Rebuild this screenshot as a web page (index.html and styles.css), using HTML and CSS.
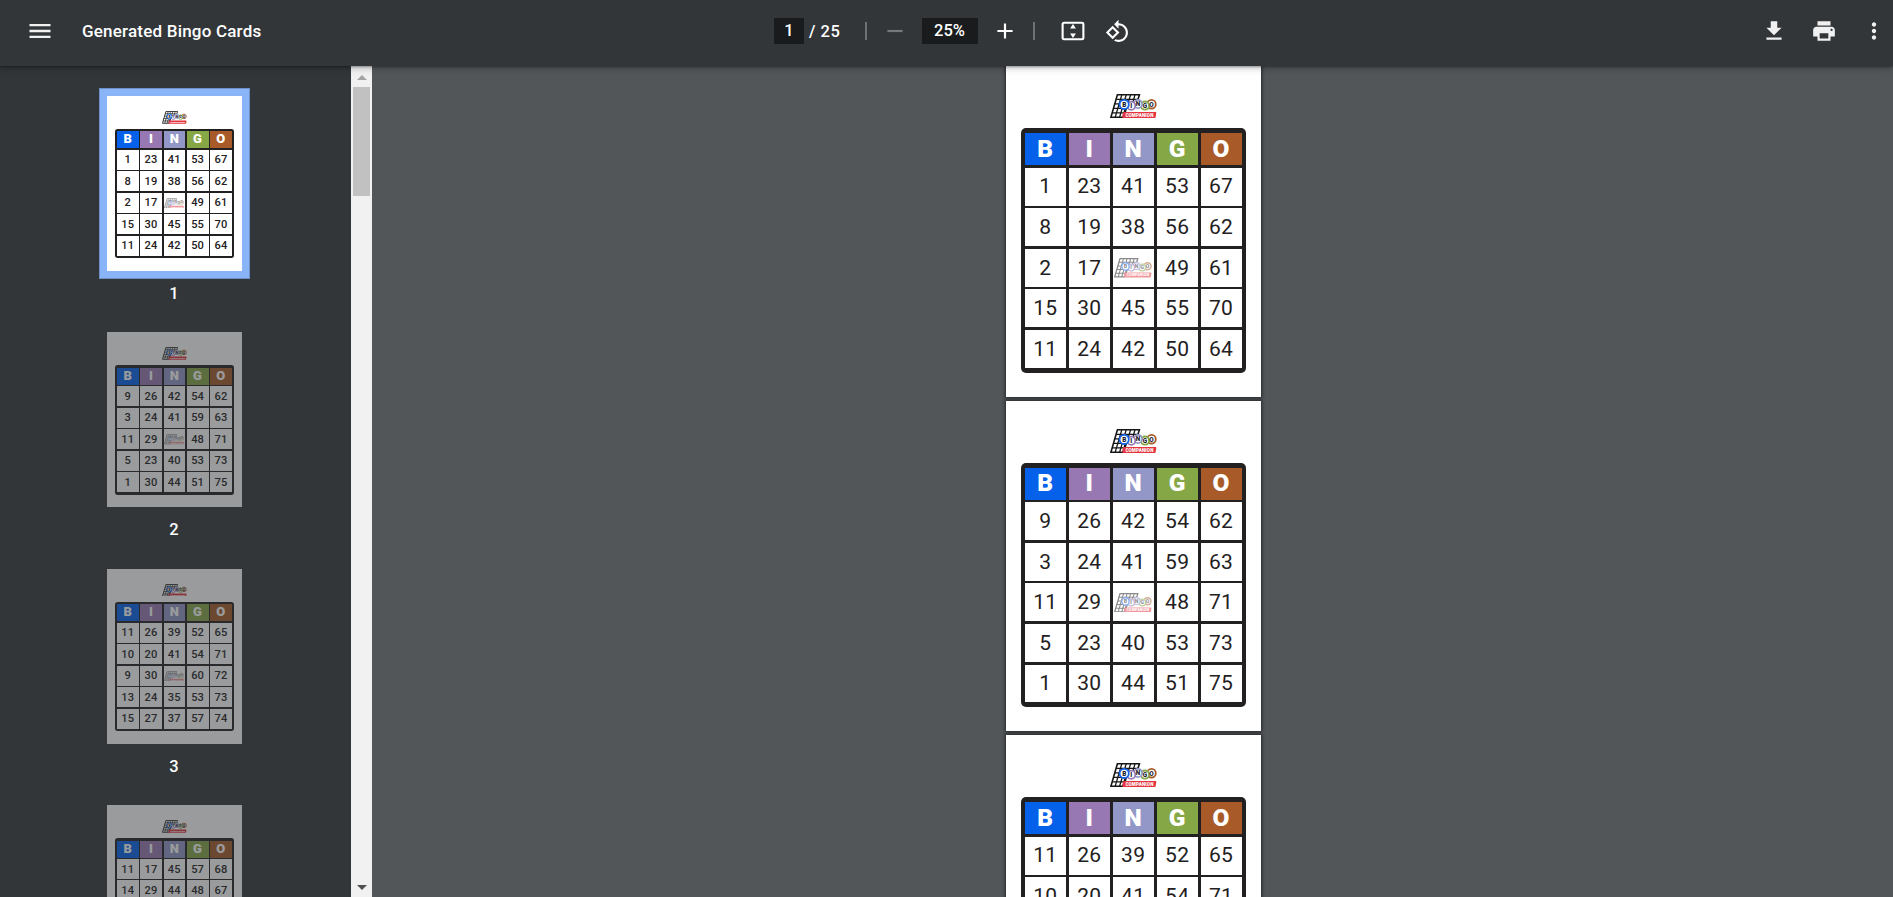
FILE: index.html
```html
<!DOCTYPE html>
<html lang="en">
<head>
<meta charset="utf-8">
<title>Generated Bingo Cards</title>
<link rel="stylesheet" href="styles.css">
</head>
<body>
<header class="toolbar">
  <div class="toolbar-start">
    <svg class="icon-menu" viewBox="0 0 24 24"><path d="M3 18h18v-2H3v2zm0-5h18v-2H3v2zm0-7v2h18V6H3z"/></svg>
    <h1 class="title">Generated Bingo Cards</h1>
  </div>
  <div class="toolbar-center">
    <span class="field page-field">1</span>
    <span class="page-total">/ 25</span>
    <span class="divider divider-a"></span>
    <svg class="icon dim" viewBox="0 0 24 24"><path d="M5 11h14v2H5z"/></svg>
    <span class="field zoom-field">25%</span>
    <svg class="icon plus" viewBox="0 0 24 24"><path d="M19 13h-6v6h-2v-6H5v-2h6V5h2v6h6v2z"/></svg>
    <span class="divider divider-b"></span>
    <svg class="icon-fit" viewBox="0 0 24 24"><rect x="3.1" y="4.9" width="17.8" height="14.2" rx="1.2" fill="none" stroke="currentColor" stroke-width="1.8"/><path d="M12 6.1 14.5 9.8H9.5zM12 17.9 14.5 14.2H9.5z"/></svg>
    <svg class="icon-rotate" viewBox="0 0 24 24"><path d="M7.34 6.41L.86 12.9l6.49 6.48 6.49-6.48-6.5-6.49zM3.69 12.9l3.66-3.66L11 12.9l-3.66 3.66-3.65-3.66zm15.67-6.26C17.61 4.88 15.3 4 13 4V.76L8.76 5 13 9.24V6c1.79 0 3.58.68 4.95 2.05 2.73 2.73 2.73 7.17 0 9.9C16.58 19.32 14.79 20 13 20c-.97 0-1.94-.21-2.84-.61l-1.49 1.49C10.02 21.62 11.51 22 13 22c2.3 0 4.61-.88 6.36-2.64 3.52-3.51 3.52-9.21 0-12.72z"/></svg>
  </div>
  <div class="toolbar-end">
    <svg class="icon" viewBox="0 0 24 24"><path d="M19 9h-4V3H9v6H5l7 7 7-7zM5 18v2h14v-2H5z"/></svg>
    <svg class="icon" viewBox="0 0 24 24"><path d="M19 8H5c-1.66 0-3 1.34-3 3v6h4v4h12v-4h4v-6c0-1.66-1.34-3-3-3zm-3 11H8v-5h8v5zm3-7c-.55 0-1-.45-1-1s.45-1 1-1 1 .45 1 1-.45 1-1 1zm-1-9H6v4h12V3z"/></svg>
    <svg class="icon" viewBox="0 0 24 24"><path d="M12 8c1.1 0 2-.9 2-2s-.9-2-2-2-2 .9-2 2 .9 2 2 2zm0 2c-1.1 0-2 .9-2 2s.9 2 2 2 2-.9 2-2-.9-2-2-2zm0 6c-1.1 0-2 .9-2 2s.9 2 2 2 2-.9 2-2-.9-2-2-2z"/></svg>
  </div>
</header>

<div class="workspace">
  <nav class="thumbnails" id="thumbnails"></nav>
  <div class="scrollbar">
    <svg class="arrow arrow-up" viewBox="0 0 10 5"><path d="M0 5 5 0l5 5z"/></svg>
    <div class="scroll-thumb"></div>
    <svg class="arrow arrow-down" viewBox="0 0 10 5"><path d="M0 0l5 5 5-5z"/></svg>
  </div>
  <main class="pages" id="pages"></main>
</div>
<script src="cards.js"></script>
</body>
</html>
```
FILE: styles.css
```css
* { box-sizing: border-box; }

body {
  margin: 0;
  height: 100vh;
  overflow: hidden;
  display: flex;
  flex-direction: column;
  background: #525659;
  font-family: Roboto, "Liberation Sans", sans-serif;
}

/* Toolbar */
.toolbar {
  position: relative;
  z-index: 2;
  flex: none;
  height: 66px;
  display: grid;
  grid-template-columns: 774px 1fr auto;
  align-items: center;
  padding-bottom: 4px;
  background: #323639;
  color: #f1f1f1;
  box-shadow: 0 -2px 8px rgba(0, 0, 0, .09), 0 4px 8px rgba(0, 0, 0, .06), 0 1px 2px rgba(0, 0, 0, .3), 0 2px 6px rgba(0, 0, 0, .15);
}
.toolbar svg { display: block; flex: none; fill: currentColor; }
.toolbar-start, .toolbar-center, .toolbar-end { display: flex; align-items: center; }
.toolbar-start { padding-left: 25.5px; }
.icon-menu { width: 28px; height: 28px; }
.title { margin: 0 0 0 28.5px; font-size: 17px; font-weight: 500; line-height: 20px; letter-spacing: .2px; color: #fff; }
.toolbar-center { font-size: 16.5px; font-weight: 500; color: #fff; }
.field {
  height: 26px;
  line-height: 25px;
  text-align: center;
  background: #191b1c;
}
.page-field { width: 30px; }
.zoom-field { width: 56px; margin-left: 14px; }
.page-total { width: 37px; margin-left: 5px; letter-spacing: .5px; white-space: nowrap; }
.divider { width: 2px; height: 18px; background: #6e7173; }
.divider-a { margin: 0 14.5px 0 19px; }
.divider-b { margin: 0 23.5px 0 15.5px; }
.icon { width: 26px; height: 26px; }
.dim { color: #76797b; }
.plus { margin-left: 14px; }
.icon-fit { width: 28px; height: 28px; }
.icon-rotate { width: 25px; height: 25px; margin-left: 18.5px; }
.toolbar-end { gap: 24px; padding-right: 6px; }

/* Body below the toolbar */
.workspace { flex: 1; min-height: 0; display: grid; grid-template-columns: 351px 21px 1fr; }
.thumbnails { overflow: hidden; padding: 30px 2px 0 0; background: #323639; }
.thumb { height: 236.4px; display: flex; flex-direction: column; align-items: center; }
.thumb .card { --u: .5294px; --gap-y: 2.7; --gap-x: 2.9; --digit-weight: 500; flex: none; opacity: .5; }
.thumb.selected .card { opacity: 1; box-shadow: 0 0 0 7px #8ab4f8, 0 0 0 8px #6d90c8; }
.thumb-label { margin-top: 13px; padding-right: 1px; font-size: 16.5px; font-weight: 500; line-height: 20px; color: #fff; }

.scrollbar { display: flex; flex-direction: column; align-items: center; background: #f1f1f1; }
.arrow { display: block; width: 10px; height: 5px; }
.arrow-up { margin: 9px 0 7px; fill: #a3a3a3; }
.scroll-thumb { width: 17px; height: 109px; background: #c1c1c1; }
.arrow-down { margin: auto 0 7px; fill: #505050; }

.pages {
  overflow: hidden;
  display: flex;
  flex-direction: column;
  align-items: center;
  gap: 4px;
  padding-left: 2px;
}
.pages .card { --u: 1px; --gap-y: 2.7; --gap-x: 2.8; --digit-weight: 400; flex: none; box-shadow: 0 0 3px 1px rgba(20, 22, 24, .7); }

/* Card: every length is a multiple of --u, so one card serves both sizes */
.card {
  width: calc(255 * var(--u));
  height: calc(330.5 * var(--u));
  padding-top: calc(28 * var(--u));
  display: flex;
  flex-direction: column;
  align-items: center;
  background: #fff;
  color: #232021;
}
.card-logo { display: block; width: calc(47 * var(--u)); height: calc(24 * var(--u)); margin-bottom: calc(10 * var(--u)); }
.board {
  width: calc(225 * var(--u));
  height: calc(244.5 * var(--u));
  padding: calc(5 * var(--u)) calc(4 * var(--u)) calc(4.5 * var(--u));
  display: grid;
  grid-template-columns: repeat(5, 1fr);
  grid-template-rows: calc(32 * var(--u)) repeat(5, 1fr);
  gap: calc(var(--gap-y) * var(--u)) calc(var(--gap-x) * var(--u));
  border-radius: calc(5 * var(--u));
  background: #232021;
}
.cell {
  min-width: 0;
  min-height: 0;
  display: flex;
  align-items: center;
  justify-content: center;
  padding: calc(.6 * var(--u)) calc(.6 * var(--u)) 0 0;
  background: #fff;
  font-size: calc(21 * var(--u));
  font-weight: var(--digit-weight);
  letter-spacing: calc(.3 * var(--u));
  line-height: 1;
}
.head { padding-top: 0; color: #fff; font-size: calc(24.5 * var(--u)); font-weight: 900; }
.head-b { background: #0560ea; }
.head-i { background: #9878b2; }
.head-n { background: #9297c8; }
.head-g { background: #86a745; }
.head-o { background: #a85b29; }
.free-logo { display: block; flex: none; width: calc(38 * var(--u)); height: calc(19.5 * var(--u)); opacity: .5; }

.logo-letters, .logo-banner { font-family: Roboto, sans-serif; font-weight: 900; letter-spacing: 0; text-anchor: middle; }
.logo-letters { font-size: 6.4px; fill: #1c1c2c; }
.logo-banner { font-size: 4.6px; fill: #fff; }
```
FILE: cards.js
```js
// Each card is five rows; null marks the free space.
const cards = [
  [[1, 23, 41, 53, 67], [8, 19, 38, 56, 62], [2, 17, null, 49, 61], [15, 30, 45, 55, 70], [11, 24, 42, 50, 64]],
  [[9, 26, 42, 54, 62], [3, 24, 41, 59, 63], [11, 29, null, 48, 71], [5, 23, 40, 53, 73], [1, 30, 44, 51, 75]],
  [[11, 26, 39, 52, 65], [10, 20, 41, 54, 71], [9, 30, null, 60, 72], [13, 24, 35, 53, 73], [15, 27, 37, 57, 74]],
  [[11, 17, 45, 57, 68], [14, 29, 44, 48, 67]]
];

const logo = (cls) => `<svg class="${cls}" viewBox="0 0 47 24">
  <path d="M7.4.8H29.4L26 12H16L13 23.2H.9Z" fill="#fff" stroke="#161616" stroke-width="1.6"/>
  <path d="M11.8.8 5.2 23.2M16.2.8 9.6 23.2M20.6.8 14.8 20M25 .8 22.6 9M6.1 5.3H28M4.8 9.8H26M3.5 14.3H17M2.2 18.8H14" fill="none" stroke="#161616" stroke-width="1.25"/>
  <g fill="#fff" stroke-width="1.8">
    <circle cx="41.5" cy="10.2" r="4.3" stroke="#a85b29"/>
    <circle cx="35" cy="11.6" r="4.1" stroke="#86a745"/>
    <circle cx="28" cy="10" r="4.1" stroke="#9297c8"/>
    <circle cx="21.2" cy="11.8" r="4.1" stroke="#9878b2"/>
    <circle cx="14.2" cy="10.4" r="4.6" stroke="#1462e6"/>
  </g>
  <g class="logo-letters"><text x="14.2" y="12.7">B</text><text x="21.2" y="14.1">I</text><text x="28" y="12.3">N</text><text x="35" y="13.9">G</text><text x="41.5" y="12.5">O</text></g>
  <path d="M13.8 18H45.6q.8 0 .7.8l-.7 4.4q-.1.8-.9.8H13q-.8 0-.7-.8l.7-4.4q.1-.8.8-.8z" fill="#e3343f"/>
  <text class="logo-banner" x="29.4" y="22.7" textLength="28">COMPANION</text>
</svg>`;

function cardMarkup(rows) {
  const heads = [...'BINGO'].map((c) => `<div class="cell head head-${c.toLowerCase()}">${c}</div>`).join('');
  const filled = rows.concat(Array(5 - rows.length).fill(['', '', '', '', '']));
  const cells = filled.flat().map((n) => `<div class="cell">${n === null ? logo('free-logo') : n}</div>`).join('');
  return `<section class="card">${logo('card-logo')}<div class="board">${heads}${cells}</div></section>`;
}

document.getElementById('thumbnails').innerHTML = cards
  .map((rows, i) => `<div class="thumb${i === 0 ? ' selected' : ''}">${cardMarkup(rows)}<div class="thumb-label">${i + 1}</div></div>`)
  .join('');
document.getElementById('pages').innerHTML = cards.slice(0, 3).map(cardMarkup).join('');
```
